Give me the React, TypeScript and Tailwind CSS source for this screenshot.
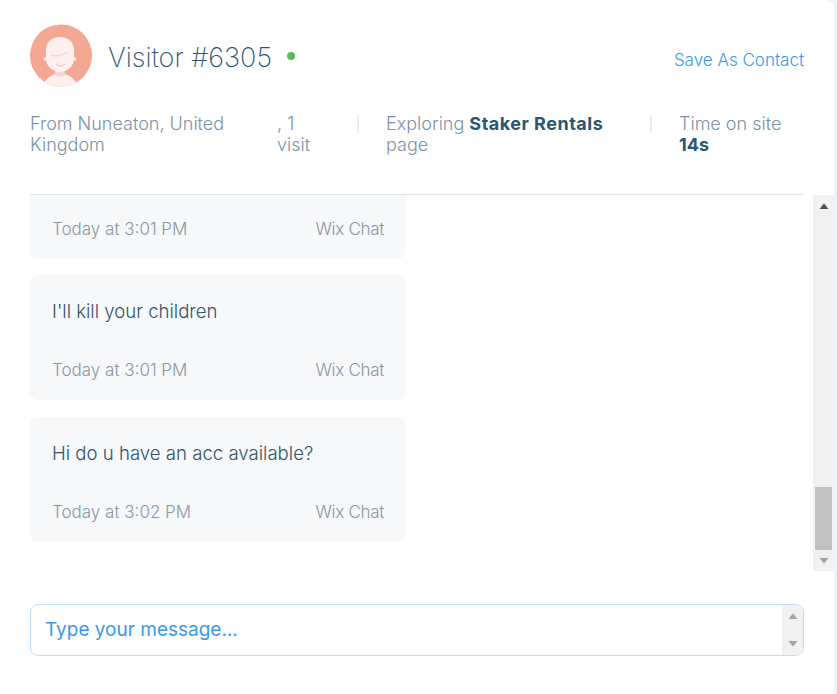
import * as React from "react";

function Avatar() {
	return (
		<svg width="62" height="63" viewBox="0 0 62 63" className="shrink-0">
			<defs>
				<clipPath id="avatarClip">
					<circle cx="31" cy="31.5" r="31" />
				</clipPath>
			</defs>
			<g clipPath="url(#avatarClip)">
				<rect width="62" height="63" fill="#f4a792" />
				<path d="M12 63c3-9 10-13 18-14 8 1 15 5 19 14z" fill="#fdf0ee" />
				<path d="M25 46h10v5c-3 2-7 2-10 0z" fill="#f9d3cc" />
				<circle cx="15.5" cy="35" r="1.8" fill="#fdf0ee" />
				<circle cx="44.5" cy="35" r="1.8" fill="#fdf0ee" />
				<path d="M16 26c0-8 6-13 14-13s14 5 14 13v9c0 7-7 13-14 13s-14-6-14-13z" fill="#fdf0ee" />
				<path d="M21 31c6 2 11 1 16-3" fill="none" stroke="#f9d8d1" strokeWidth="1.5" />
				<path d="M26 40c2.500 2.500 6 2.500 9 0" fill="none" stroke="#f9cbbf" strokeWidth="1.4" />
			</g>
		</svg>
	);
}

function Message({ text, time, clipped, className = "" }: { text?: string; time: string; clipped?: boolean; className?: string }) {
	return (
		<div
			className={`w-[375px] bg-[#f6f8fa] pl-[22px] pr-[21px] flex flex-col shrink-0 ${className} ${
				clipped ? "h-[64px] rounded-b-lg justify-end pb-[19px]" : "h-[125px] rounded-lg pt-[24px]"
			}`}
		>
			{text && <div className="text-[18.6px] leading-[24px] font-light text-[#32536a] flex-1">{text}</div>}
			<div
				className={`flex justify-between text-[17px] leading-[22px] font-light text-[#8a97a3] ${
					clipped ? "" : "pb-[19px]"
				}`}
			>
				<span>{time}</span>
				<span className="tracking-[-0.3px]">Wix Chat</span>
			</div>
		</div>
	);
}

function Arrow({ up, color }: { up?: boolean; color: string }) {
	return (
		<svg width="10" height="6" viewBox="0 0 10 6" fill={color}>
			<path d={up ? "M0.5 6 5 0.5 9.5 6z" : "M0.5 0 5 5.5 9.5 0z"} />
		</svg>
	);
}

export default function App() {
	return (
		<div className="w-[837px] h-[694px] bg-[#eff3f7] overflow-hidden font-['Inter','Liberation_Sans',sans-serif]">
			<div className="w-[834px] h-[694px] bg-white rounded-tr-lg flex flex-col">
				<div className="px-[30px] pt-[24px]">
					<div className="flex items-center h-[62px]">
						<Avatar />
						<div className="ml-[16px] mt-[6px] text-[27px] leading-[36px] font-extralight text-[#2b5672]">Visitor #6305</div>
						<div className="ml-[15px] mt-[1px] w-2 h-2 rounded-full bg-[#60bc57]" />
						<div className="ml-auto mt-[10px] text-[17px] leading-[22px] font-light text-[#3899ec]">Save As Contact</div>
					</div>
					<div className="flex mt-[27px] h-[82px] border-b border-[#dfe5eb] text-[18px] leading-[21px] font-light text-[#7a92a5]">
						<div className="w-[247px]">From Nuneaton, United Kingdom</div>
						<div className="w-[40px]">, 1 visit</div>
						<div className="ml-[40px] mt-[2px] w-[2px] h-[18px] bg-[#e8edf2]" />
						<div className="ml-[27px] w-[236px]">
							Exploring <b className="font-bold tracking-[0.5px] text-[#2b5672]">Staker Rentals</b> page
						</div>
						<div className="ml-[28px] mt-[2px] w-[2px] h-[18px] bg-[#e8edf2]" />
						<div className="ml-[27px]">
							Time on site
							<br />
							<b className="font-bold text-[#2b5672]">14s</b>
						</div>
					</div>
				</div>

				<div className="flex h-[376px] pl-[30px]">
					<div className="flex-1 flex flex-col gap-[16px] overflow-hidden">
						<Message clipped time="Today at 3:01 PM" />
						<Message text="I'll kill your children" time="Today at 3:01 PM" />
						<Message text="Hi do u have an acc available?" time="Today at 3:02 PM" className="mt-px" />
					</div>
					<div className="w-[21px] ml-[9px] bg-[#f1f1f1] flex flex-col items-center">
						<div className="h-[17px] pt-[8px] flex items-start">
							<Arrow up color="#505050" />
						</div>
						<div className="flex-1" />
						<div className="w-[17px] h-[63px] bg-[#c1c1c1]" />
						<div className="h-[21px] flex items-center">
							<Arrow color="#a3a3a3" />
						</div>
					</div>
				</div>

				<div className="mx-[30px] mt-[33px] h-[52px] rounded-lg border border-[#b9e0fb] flex overflow-hidden">
					<div className="flex-1 pl-[14px] pt-[13px] text-[19px] leading-[24px] text-[#3899ec]">
						Type your message...
					</div>
					<div className="w-[21px] bg-[#f1f1f1] flex flex-col items-center justify-between py-[8px]">
						<Arrow up color="#a3a3a3" />
						<Arrow color="#a3a3a3" />
					</div>
				</div>
			</div>
		</div>
	);
}
